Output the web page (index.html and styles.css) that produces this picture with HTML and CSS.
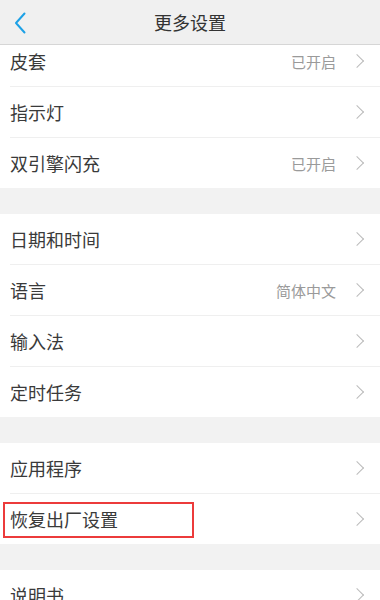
FILE: index.html
```html
<!DOCTYPE html>
<html lang="zh-CN">
<head>
    <meta charset="UTF-8">
    <meta name="viewport" content="width=device-width, initial-scale=1.0">
    <title>更多设置</title>
    <link rel="stylesheet" href="styles.css">
</head>
<body>
    <div class="topbar">
        <a href="#" class="back">
            <svg width="14" height="22" viewBox="0 0 14 22"><path d="M11.5 1.5 L3 11 L11.5 20.5" fill="none" stroke="#1da1e6" stroke-width="2" stroke-linecap="round" stroke-linejoin="round"/></svg>
        </a>
        <h1>更多设置</h1>
    </div>

    <div class="content">
        <div class="group first">
            <div class="row"><span class="label">皮套</span><span class="value">已开启</span><i class="arrow"></i></div>
            <div class="row"><span class="label">指示灯</span><i class="arrow"></i></div>
            <div class="row"><span class="label">双引擎闪充</span><span class="value">已开启</span><i class="arrow"></i></div>
        </div>

        <div class="group">
            <div class="row"><span class="label">日期和时间</span><i class="arrow"></i></div>
            <div class="row"><span class="label">语言</span><span class="value">简体中文</span><i class="arrow"></i></div>
            <div class="row"><span class="label">输入法</span><i class="arrow"></i></div>
            <div class="row"><span class="label">定时任务</span><i class="arrow"></i></div>
        </div>

        <div class="group">
            <div class="row"><span class="label">应用程序</span><i class="arrow"></i></div>
            <div class="row"><span class="label marked">恢复出厂设置</span><i class="arrow"></i></div>
        </div>

        <div class="group">
            <div class="row"><span class="label">说明书</span><i class="arrow"></i></div>
        </div>
    </div>
</body>
</html>
```

FILE: styles.css
```css
body { margin: 0; padding: 0; background: #f2f2f2; font-family: "Noto Sans CJK SC", "Noto Sans", sans-serif; color: #3a3a3a; height: 600px; overflow: hidden; }
.topbar { position: relative; z-index: 2; height: 44px; background: #f0f0f0; border-bottom: 1px solid #d6d6d6; display: flex; align-items: center; justify-content: center; }
.topbar h1 { margin: 0; font-size: 18px; font-weight: normal; color: #333; }
.back { position: absolute; left: 13px; top: 12px; }
.content { overflow: hidden; }
.group { background: #fff; margin-bottom: 26px; }
.group.first { margin-top: -9px; }
.row { height: 50px; display: flex; align-items: center; margin-left: 10px; padding-right: 14px; border-bottom: 1px solid #efefef; }
.row:last-child { border-bottom: none; }
.label { font-size: 18px; flex: 1; }
.label.marked { flex: none; line-height: 1.3; margin-left: -7px; margin-top: 2px; padding: 4px 74px 4px 5px; border: 2px solid #ec3b3b; margin-right: auto; }
.value { font-size: 15px; color: #9a9a9a; margin-right: 16px; }
.arrow { width: 9px; height: 9px; border-top: 1.5px solid #bbb; border-right: 1.5px solid #bbb; transform: rotate(45deg); margin-right: 4px; }
```
